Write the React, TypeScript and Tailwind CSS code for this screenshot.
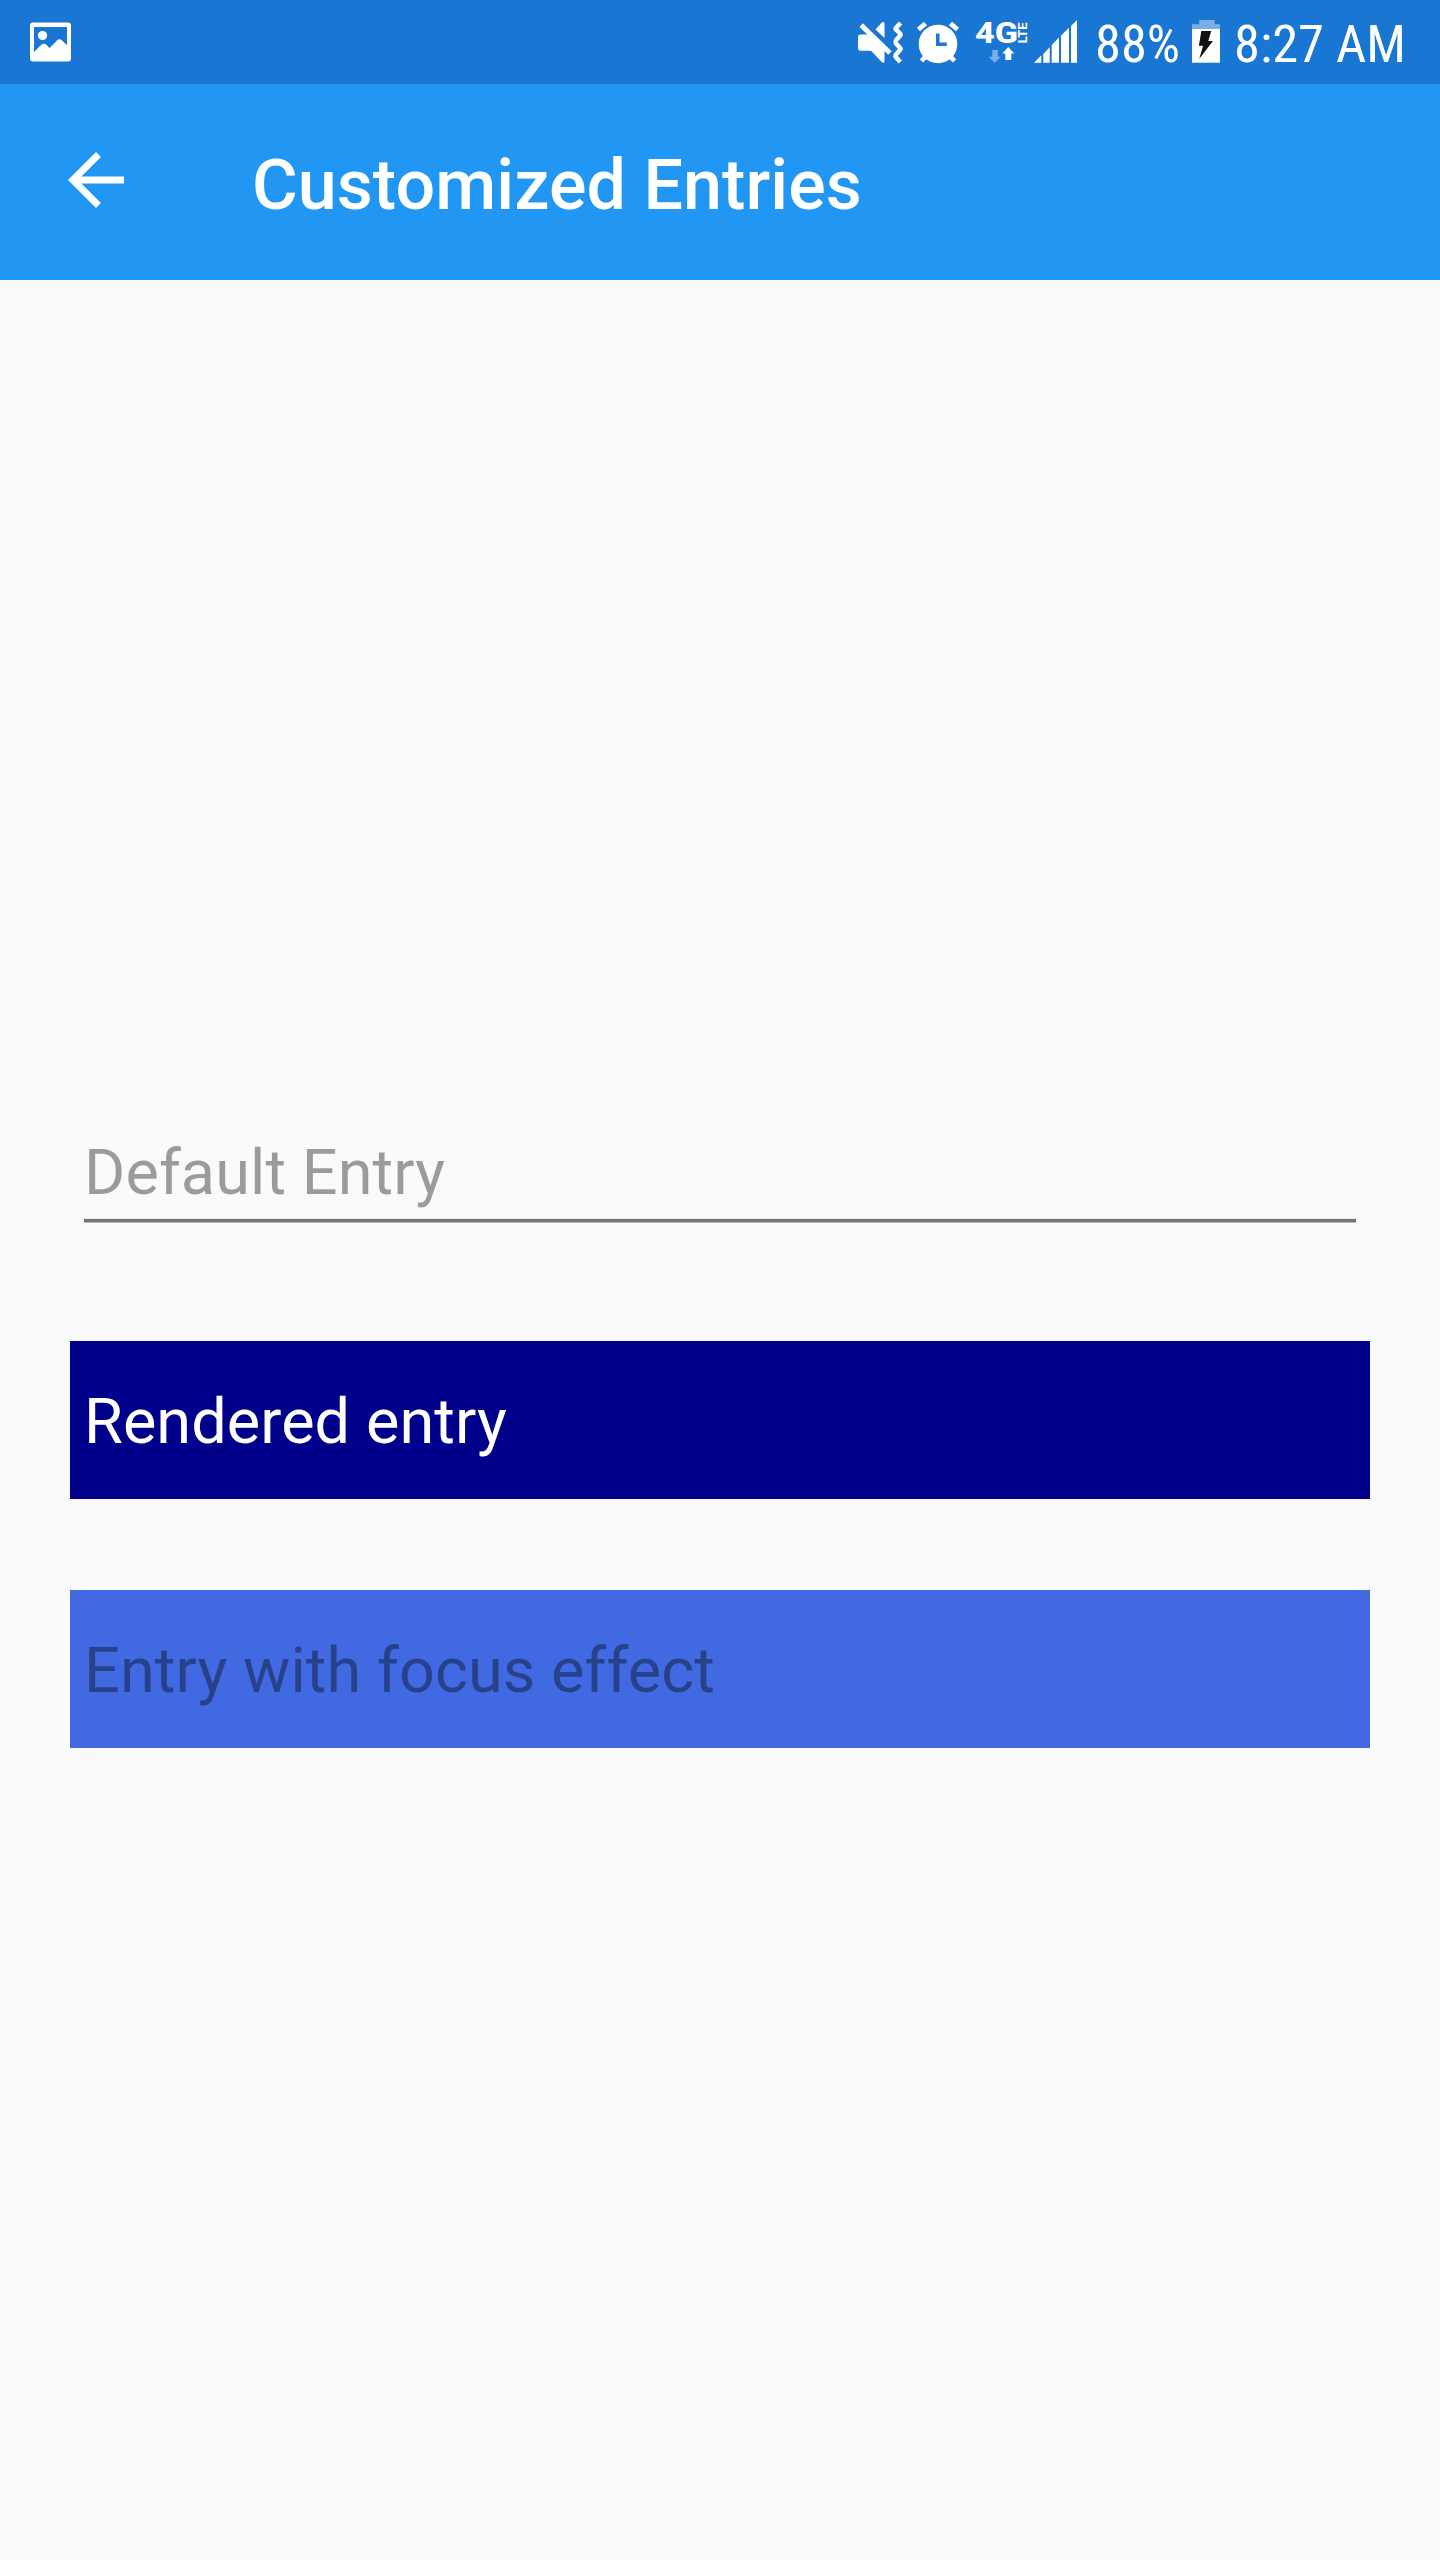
function PictureIcon() {
  return (
    <svg className="ml-[30px] h-[84px] w-[41px]" viewBox="30 0 41 84" aria-hidden="true">
      <path
        fill="#fff"
        fillRule="evenodd"
        d="M33 22.5h35a3 3 0 0 1 3 3v33a3 3 0 0 1-3 3H33a3 3 0 0 1-3-3v-33a3 3 0 0 1 3-3ZM34 27v25l7.300-7.200q2.500-2 5 0l3.200 3.200 7.500-7.500q2.500-2.300 5 0l5 4.800V27Z"
      />
      <circle cx="42.500" cy="35.500" r="4.600" fill="#fff" />
    </svg>
  );
}

function MutedVibrateIcon() {
  return (
    <svg className="h-[84px] w-[46px]" viewBox="858 0 46 84" fill="#fff" aria-hidden="true">
      <path d="M862.800 23.300 891.700 51.200 888.200 54.700 859.500 27Z" />
      <path d="M860 34.500h9L884.500 50v11q0 2.500-2.500 1.200L871 50.700h-11q-2-.2-2-2.200V36.700q0-2 2-2.200Z" />
      <path d="M884.500 38V23.500q0-2.200-2.500-1.200L875.500 29.500Z" />
      <path
        d="M900.500 23 895.700 28.200Q895.400 29 896 29.500L900 33.500Q901 34.700 900 35.800L896 40.300Q895 42 896 43.500L900 47.700Q901 49 900 50L896 54.500Q895 56 896 57.300L900.300 62"
        fill="none"
        stroke="#fff"
        strokeWidth="4.500"
      />
    </svg>
  );
}

function AlarmIcon() {
  return (
    <svg className="ml-[13px] h-[84px] w-[43px]" viewBox="917 0 43 84" aria-hidden="true">
      <circle cx="938" cy="44" r="19.300" fill="#fff" />
      <path
        d="m918.500 29.500 7-6M957.500 29.500l-7-6M921.500 61l5-5.500M954.500 61l-5-5.500"
        stroke="#fff"
        strokeWidth="4.800"
      />
      <path d="M937.800 33.500v10.800h9" fill="none" stroke="#1976d2" strokeWidth="3.500" />
    </svg>
  );
}

function NetworkIcon() {
  return (
    <svg className="ml-[14px] h-[84px] w-[58px]" viewBox="974 0 58 84" fill="#fff" aria-hidden="true">
      <text
        x="975"
        y="43"
        textLength="43"
        lengthAdjust="spacingAndGlyphs"
        fontFamily="Roboto, sans-serif"
        fontWeight="800"
        fontSize="29.500"
      >
        4G
      </text>
      <text
        transform="translate(1027 43.300) rotate(-90)"
        textLength="21"
        lengthAdjust="spacingAndGlyphs"
        fontFamily="Roboto, sans-serif"
        fontWeight="700"
        fontSize="12"
      >
        LTE
      </text>
      <path d="M992.300 50h5.500v6.700h3l-6.100 6.100-6.100-6.100h3.700Z" fillOpacity=".42" />
      <path d="m1008.300 47 6 6.500h-3V60h-6v-6.500h-3Z" />
    </svg>
  );
}

function SignalIcon() {
  return (
    <svg className="ml-[2px] h-[84px] w-[44px]" viewBox="1034 0 44 84" fill="#fff" aria-hidden="true">
      <path d="m1034 62.700 7.300-7.400v7.400ZM1043.300 54l6.400-6.700v15.400h-6.400ZM1051.700 45l7.300-7.500v25.200h-7.300ZM1061 35.500l8-7.700v34.900h-8ZM1071 26l6-6v42.700h-6Z" />
    </svg>
  );
}

function BatteryIcon() {
  return (
    <svg className="h-[84px] w-[28px]" viewBox="1192 0 28 84" aria-hidden="true">
      <path d="M1199.300 20h15.300v4.300h5.400V29h-28v-4.700h7.300Z" fill="#fff" fillOpacity=".42" />
      <path d="M1192 29h28v33.700h-28Z" fill="#fff" />
      <path d="M1201.300 31h9.900l-2.900 9.900h4.700l-13.700 17.800 3.800-12.900h-4.200Z" fill="#111" />
    </svg>
  );
}

function Entry({ placeholder, className }: { placeholder: string; className: string }) {
  return (
    <div className={`h-[158px] pt-[44px] pl-[14px] text-[63px] leading-[74px] tracking-[0.07px] whitespace-nowrap ${className}`}>
      {placeholder}
    </div>
  );
}

export default function App() {
  return (
    <div className="h-[2560px] w-[1440px] overflow-hidden bg-[#fafafa] font-['Roboto',sans-serif]">
      <div className="flex h-[84px] items-center bg-[#1976d2] text-white">
        <PictureIcon />
        <div className="ml-auto flex w-[582px] items-center">
          <MutedVibrateIcon />
          <AlarmIcon />
          <NetworkIcon />
          <SignalIcon />
          <span className="ml-[17px] w-[97px] pt-[3px] font-['Roboto_Condensed','Roboto',sans-serif] text-[52.5px] leading-[84px] whitespace-nowrap font-stretch-condensed">
            88%
          </span>
          <BatteryIcon />
          <span className="ml-[14px] pt-[3px] font-['Roboto_Condensed','Roboto',sans-serif] text-[52.5px] leading-[84px] whitespace-nowrap font-stretch-condensed">
            8:27 AM
          </span>
        </div>
      </div>
      <header className="flex h-[196px] bg-[#2196f3] text-white">
        <svg className="mt-[54px] ml-[54px] size-[84px]" viewBox="0 0 24 24" fill="#fff" aria-label="Back">
          <path d="M20 11H7.830l5.590-5.590L12 4l-8 8 8 8 1.410-1.410L7.830 13H20z" />
        </svg>
        <h1 className="mt-[60px] ml-[114px] text-[70px] leading-[82px] font-medium tracking-[0.07px] whitespace-nowrap">
          Customized Entries
        </h1>
      </header>
      <main className="flex flex-col gap-[91px] px-[70px] pt-[812px]">
        <div>
          <Entry placeholder="Default Entry" className="text-black/38" />
          <div className="mx-[14px] -mt-8 h-[5px] border-t border-b border-t-[#eaeaea] border-b-[#b5b5b5] bg-[#737373]" />
          <div className="h-[27px]" />
        </div>
        <Entry placeholder="Rendered entry" className="bg-[#00008b] text-white" />
        <Entry placeholder="Entry with focus effect" className="bg-[#4169e1] text-black/38" />
      </main>
    </div>
  );
}
